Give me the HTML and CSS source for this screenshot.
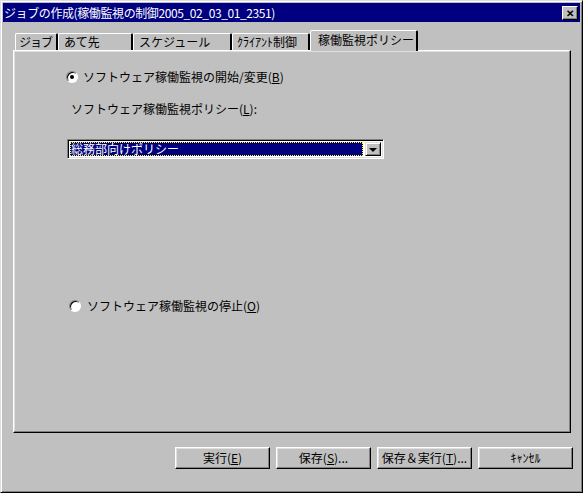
FILE: index.html
```html
<!DOCTYPE html>
<html lang="ja">
<head>
  <meta charset="UTF-8" />
  <title>ジョブの作成</title>
  <link rel="stylesheet" href="styles.css">
</head>
<body>
  <div class="window">
    <div class="titlebar">
      <span class="title">ジョブの作成(稼働監視の制御2005_02_03_01_2351)</span>
      <span class="close">✕</span>
    </div>

    <div class="tabs">
      <div class="tab w1">ジョブ</div>
      <div class="tab w2">あて先</div>
      <div class="tab w3">スケジュール</div>
      <div class="tab w4">ｸﾗｲｱﾝﾄ制御</div>
      <div class="tab w5 active">稼働監視ポリシー</div>
    </div>

    <div class="panel">
      <label class="option first">
        <span class="radio checked"></span>
        <span>ソフトウェア稼働監視の開始/変更(<u>B</u>)</span>
      </label>

      <div class="field-label">ソフトウェア稼働監視ポリシー(<u>L</u>):</div>

      <div class="combo">
        <div class="combo-value"><span>総務部向けポリシー</span></div>
        <div class="combo-btn"><span class="arrow"></span></div>
      </div>

      <label class="option second">
        <span class="radio"></span>
        <span>ソフトウェア稼働監視の停止(<u>O</u>)</span>
      </label>
    </div>

    <div class="actions">
      <button>実行(<u>E</u>)</button>
      <button>保存(<u>S</u>)...</button>
      <button>保存＆実行(<u>T</u>)...</button>
      <button>ｷｬﾝｾﾙ</button>
    </div>
  </div>
</body>
</html>
```

FILE: styles.css
```css
:root {
  --face: #c0c0c0;
  --shadow: #808080;
  --dark: #000;
  --light: #dfdfdf;
  --hilite: #fff;
  --navy: #000080;
}

* {
  margin: 0;
  padding: 0;
  box-sizing: border-box;
}

body {
  background: #fff;
  font-family: "Noto Sans CJK JP", "Noto Sans", sans-serif;
  font-size: 12px;
  line-height: 14px;
  color: #000;
}

u {
  text-decoration: underline;
  text-underline-offset: 1px;
}

.window {
  width: 583px;
  height: 493px;
  background: var(--face);
  border: 1px solid;
  border-color: var(--light) var(--dark) var(--dark) var(--light);
  box-shadow: inset 1px 1px var(--hilite), inset -1px -1px var(--shadow);
  padding: 2px;
  display: flex;
  flex-direction: column;
}

/* title bar */
.titlebar {
  height: 19px;
  background: var(--navy);
  color: #fff;
  display: flex;
  align-items: center;
  justify-content: space-between;
  padding: 0 2px 0 1px;
}

.title {
  letter-spacing: -0.4px;
}

.close {
  width: 16px;
  height: 14px;
  background: var(--face);
  color: #000;
  border: 1px solid;
  border-color: var(--hilite) var(--dark) var(--dark) var(--hilite);
  box-shadow: inset -1px -1px var(--shadow);
  font-size: 10px;
  font-weight: bold;
  line-height: 12px;
  text-align: center;
}

/* tabs */
.tabs {
  display: flex;
  align-items: flex-end;
  height: 21px;
  margin: 7px 0 0 12px;
}

.tab {
  height: 17px;
  padding: 1px 0 0 5px;
  border-top: 1px solid var(--hilite);
  border-left: 1px solid var(--hilite);
  border-right: 2px solid;
  border-right-color: var(--dark);
  border-radius: 2px 2px 0 0;
  white-space: nowrap;
}

.w1 { width: 43px; padding-left: 3px; letter-spacing: -1px; }
.w2 { width: 75px; }
.w3 { width: 99px; }
.w4 { width: 78px; padding-left: 4px; }
.w5 { width: 108px; }

.tab.active {
  height: 21px;
  padding-top: 2px;
  padding-left: 7px;
  margin-bottom: -1px;
  background: var(--face);
  position: relative;
  z-index: 1;
}

/* tab page */
.panel {
  flex: 1;
  margin: 0 9px 0 10px;
  border: 1px solid;
  border-color: var(--hilite) var(--dark) var(--dark) var(--hilite);
  box-shadow: inset -1px -1px var(--shadow), inset 1px 1px var(--light);
  padding: 19px 0 0 1px;
  display: flex;
  flex-direction: column;
  align-items: flex-start;
}

.option {
  display: flex;
  align-items: center;
  gap: 5px;
  height: 14px;
}

.option.first {
  margin-left: 51px;
}

.option.second {
  margin: 140px 0 0 54px;
  gap: 6px;
}

.radio {
  width: 12px;
  height: 12px;
  border-radius: 50%;
  background: #fff;
  border: 1px solid;
  border-color: var(--shadow) var(--hilite) var(--hilite) var(--shadow);
  box-shadow: inset 1px 1px var(--dark);
  position: relative;
}

.radio.checked::after {
  content: "";
  position: absolute;
  left: 3px;
  top: 3px;
  width: 4px;
  height: 4px;
  border-radius: 50%;
  background: #000;
}

.field-label {
  margin: 18px 0 0 56px;
}

/* combo box */
.combo {
  margin: 23px 0 0 52px;
  width: 317px;
  height: 20px;
  background: #fff;
  border: 1px solid;
  border-color: var(--shadow) var(--hilite) var(--hilite) var(--shadow);
  box-shadow: inset 1px 1px var(--dark), inset -1px -1px var(--light);
  padding: 2px;
  display: flex;
  gap: 2px;
}

.combo-value {
  flex: 1;
  background: var(--navy);
  color: #fff;
  outline: 1px dotted #ff0;
  outline-offset: -1px;
  padding-left: 1px;
  line-height: 14px;
}

.combo-btn {
  width: 16px;
  background: var(--face);
  border: 1px solid;
  border-color: var(--light) var(--dark) var(--dark) var(--light);
  box-shadow: inset 1px 1px var(--hilite), inset -1px -1px var(--shadow);
  display: flex;
  align-items: center;
  justify-content: center;
}

.arrow {
  width: 0;
  height: 0;
  border-left: 4px solid transparent;
  border-right: 4px solid transparent;
  border-top: 4px solid #000;
  margin-top: 1px;
}

/* buttons */
.actions {
  display: flex;
  justify-content: flex-end;
  gap: 6px;
  padding: 14px 7px 21px 0;
}

button {
  width: 95px;
  height: 22px;
  font: inherit;
  background: var(--face);
  color: #000;
  border: 1px solid;
  border-color: var(--hilite) var(--dark) var(--dark) var(--hilite);
  box-shadow: inset -1px -1px var(--shadow), inset 1px 1px var(--light);
  white-space: nowrap;
}
```
